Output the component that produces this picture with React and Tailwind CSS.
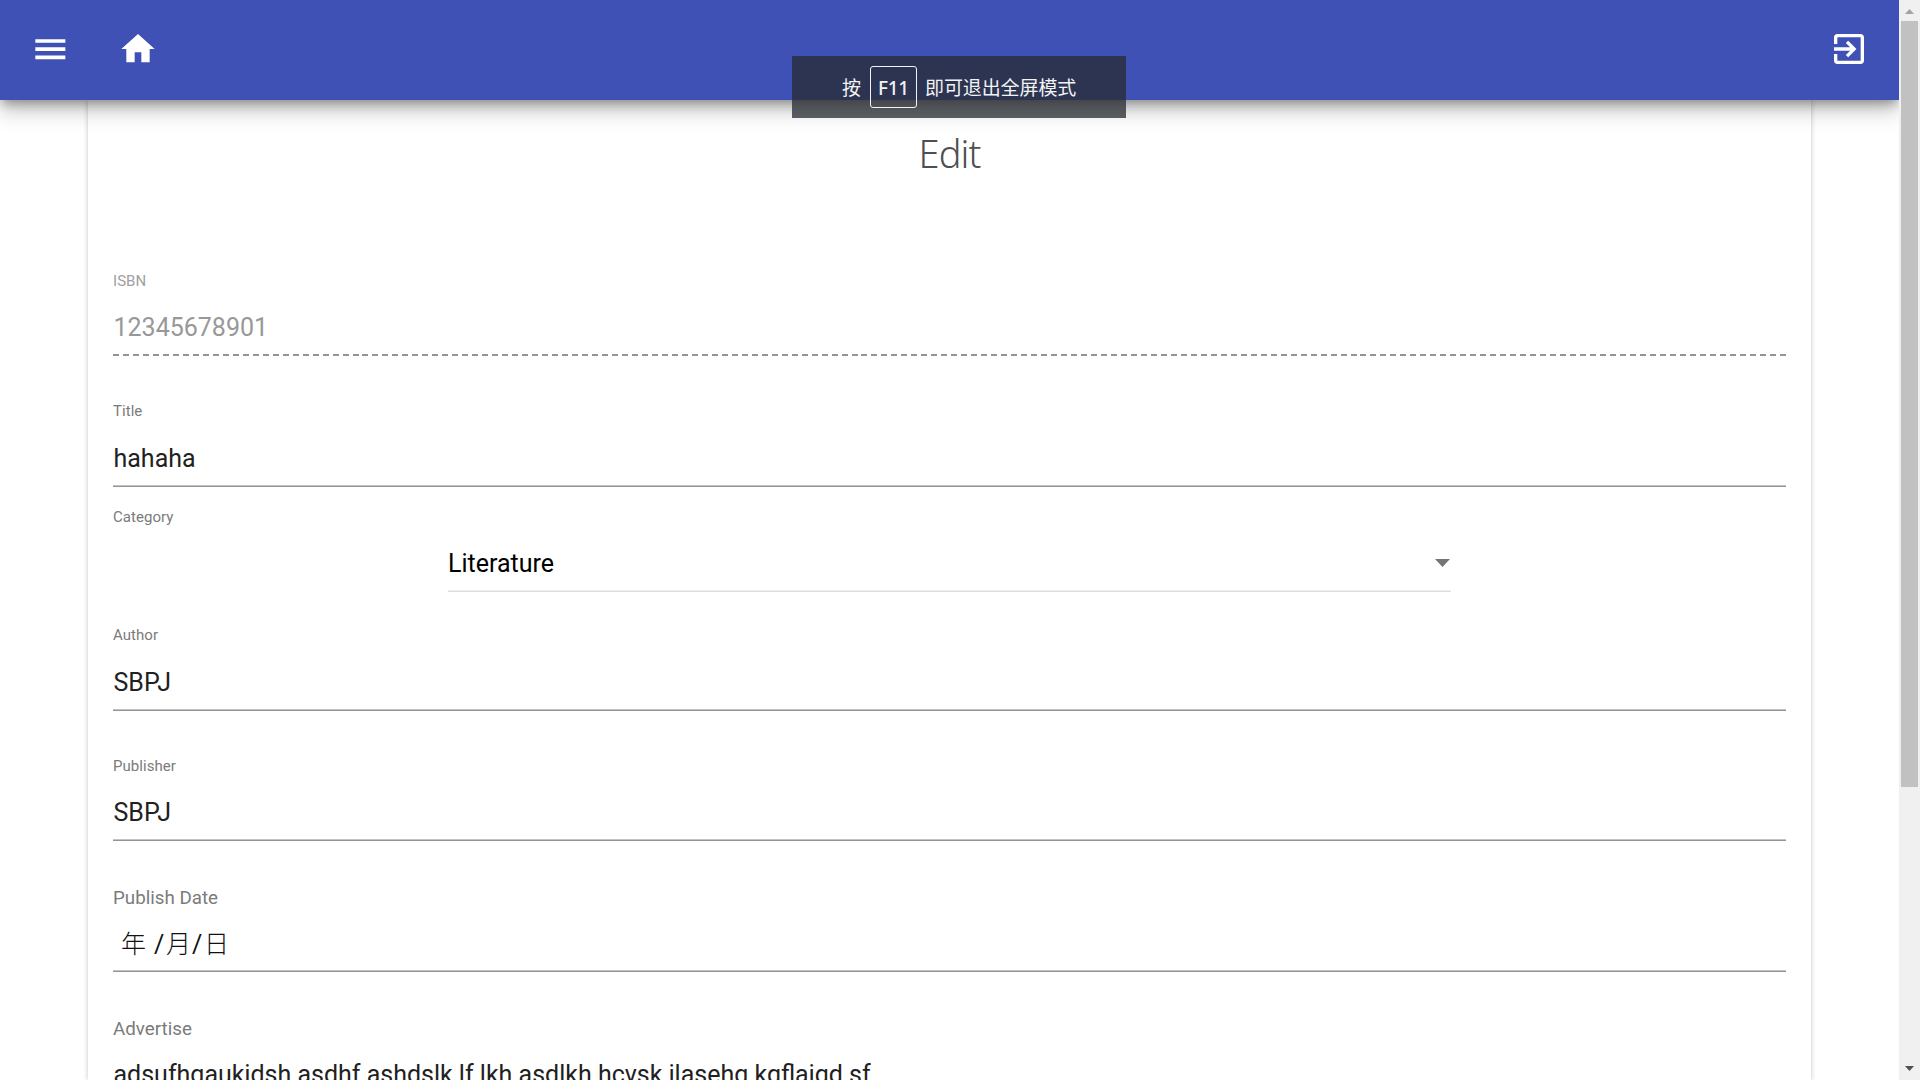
function Icon({ d, className = '' }) {
  return (
    <svg viewBox="0 0 24 24" className={`h-10 w-10 shrink-0 fill-white ${className}`}>
      <path d={d} />
    </svg>
  );
}

function Underline({ dashed }) {
  if (dashed) {
    return (
      <div className="h-0.5 w-full shrink-0 bg-[repeating-linear-gradient(90deg,#949494_0_6px,transparent_6px_9.98px)]" />
    );
  }
  return <div className="h-0.5 w-full shrink-0 border-t border-[#c3c3c3] bg-[#949494]" />;
}

function Field({ label, value, height = 'h-[131px]', gap = 'mb-[23px]', disabled }) {
  return (
    <div className={`flex shrink-0 flex-col justify-end ${height}`}>
      <div className={`h-5 text-[15px] leading-5 tracking-[0.05px] ${gap} ${disabled ? 'text-[#a0a0a0]' : 'text-[#7b7b7b]'}`}>
        {label}
      </div>
      <div className={`mb-[11px] h-[30px] pl-[0.5px] text-[25px] leading-[30px] ${disabled ? 'text-[#989898]' : 'text-[#212121]'}`}>
        {value}
      </div>
      <Underline dashed={disabled} />
    </div>
  );
}

function Header() {
  return (
    <header className="relative z-10 flex h-[100px] shrink-0 items-center bg-[#3f51b5] pr-[30px] pb-[2px] pl-[30px] shadow-[0_5px_10px_-2px_rgba(0,0,0,0.3),0_10px_20px_0_rgba(0,0,0,0.25)]">
      <svg viewBox="0 0 24 24" className="h-10 w-10 shrink-0 fill-white">
        <path d="M3.2 18.1h18v-2.2h-18v2.2zm0-4.9h18v-2.2h-18v2.2zm0-7.1v2.2h18V6.1h-18z" />
      </svg>
      <Icon className="ml-12" d="M10 20v-6h4v6h5v-8h3L12 3 2 12h3v8z" />
      <Icon
        className="ml-auto"
        d="M10.09 15.59L11.5 17l5-5-5-5-1.41 1.41L12.67 11H3v2h9.67l-2.58 2.59zM19 3H5c-1.11 0-2 .9-2 2v4h2V5h14v14H5v-4H3v4c0 1.1.89 2 2 2h14c1.1 0 2-.9 2-2V5c0-1.1-.9-2-2-2z"
      />
    </header>
  );
}

function Scrollbar() {
  return (
    <div className="flex w-[21px] shrink-0 flex-col items-center bg-[#f0f0f0]">
      <div className="flex h-[21px] w-full items-center justify-center">
        <svg viewBox="0 0 9 5" className="mt-[2px] h-[5px] w-[9px] fill-[#a3a3a3]">
          <path d="M0 5L4.5 0L9 5z" />
        </svg>
      </div>
      <div className="h-[766px] w-[17px] bg-[#c1c1c1]" />
      <svg viewBox="0 0 9 5" className="mt-auto mb-[9px] h-[5px] w-[9px] fill-[#505050]">
        <path d="M0 0L4.5 5L9 0z" />
      </svg>
    </div>
  );
}

function FullscreenHint() {
  return (
    <div className="absolute top-14 left-[792px] z-20 flex h-[62px] w-[333.5px] items-center bg-[rgba(39,43,50,0.76)] pl-[50px] font-['Noto_Sans','Noto_Sans_CJK_SC',sans-serif] text-[19px] leading-7 whitespace-nowrap text-[#f1f3f4]">
      <span className="w-[20px] pt-[2px]">按</span>
      <span className="ml-[8px] flex h-[42px] w-[47px] items-center justify-center rounded-[3px] border border-[#f1f3f4] pt-[2px] font-medium tracking-[-0.3px]">
        F11
      </span>
      <span className="ml-[8px] pt-[2px] tracking-[-0.1px]">即可退出全屏模式</span>
    </div>
  );
}

export default function App() {
  return (
    <div className="relative flex h-[1080px] w-[1920px] overflow-hidden bg-white font-[Roboto,'Noto_Sans_CJK_SC',sans-serif]">
      <div className="flex min-w-0 flex-1 flex-col overflow-hidden">
        <Header />
        <main className="mx-[88px] flex min-h-0 flex-1 flex-col px-[25px] shadow-[0_0_5px_0_rgba(0,0,0,0.24)]">
          <h1 className="mt-[28px] h-[52px] shrink-0 text-center font-['Noto_Sans',sans-serif] text-[38px] leading-[50px] tracking-[-0.9px] text-[#4f4f4f] [font-weight:350]">
            Edit
          </h1>
          <Field label="ISBN" value="12345678901" height="h-[176px]" gap="mb-[22px]" disabled />
          <Field label="Title" value="hahaha" />
          <div className="flex h-[105px] shrink-0 flex-col justify-end">
            <div className="mb-[22px] h-5 text-[15px] leading-5 tracking-[0.05px] text-[#7b7b7b]">Category</div>
            <div className="ml-[335px] w-[1003px]">
              <div className="mb-[11px] flex h-[30px] items-center justify-between text-[25px] leading-[30px] text-black">
                <span>Literature</span>
                <svg viewBox="0 0 15 8" className="mr-[1px] mb-[2px] h-2 w-[15px] fill-[#757575]">
                  <path d="M0 0h15L7.5 8z" />
                </svg>
              </div>
              <div className="h-0.5 border-t border-[#f0f0f0] bg-[#dedede]" />
            </div>
          </div>
          <Field label="Author" value="SBPJ" height="h-[119px]" />
          <Field label="Publisher" value="SBPJ" height="h-[130px]" gap="mb-[22px]" />
          <div className="flex h-[131px] shrink-0 flex-col justify-end">
            <div className="mb-[20px] h-6 text-[18.75px] leading-6 text-[#7b7b7b]">Publish Date</div>
            <div className="mb-[10px] flex h-[30px] pl-2 text-[25px] leading-[30px] whitespace-pre text-[#111111]">
              <span className="font-light">年</span>
              <span className="ml-[8px] w-[12px]">/</span>
              <span className="font-light">月</span>
              <span className="ml-[1px] w-[12px]">/</span>
              <span className="font-light">日</span>
            </div>
            <Underline />
          </div>
          <div className="flex shrink-0 flex-col pt-[45px]">
            <div className="mb-[19px] h-6 text-[18.75px] leading-6 text-[#7b7b7b]">Advertise</div>
            <div className="h-[30px] pl-[0.5px] text-[25px] leading-[30px] whitespace-nowrap text-[#212121]">
              adsufhgaukjdsh asdhf ashdslk lf lkh asdlkh hcvsk jlasehg kgflajgd sf
            </div>
          </div>
        </main>
      </div>
      <Scrollbar />
      <FullscreenHint />
    </div>
  );
}
